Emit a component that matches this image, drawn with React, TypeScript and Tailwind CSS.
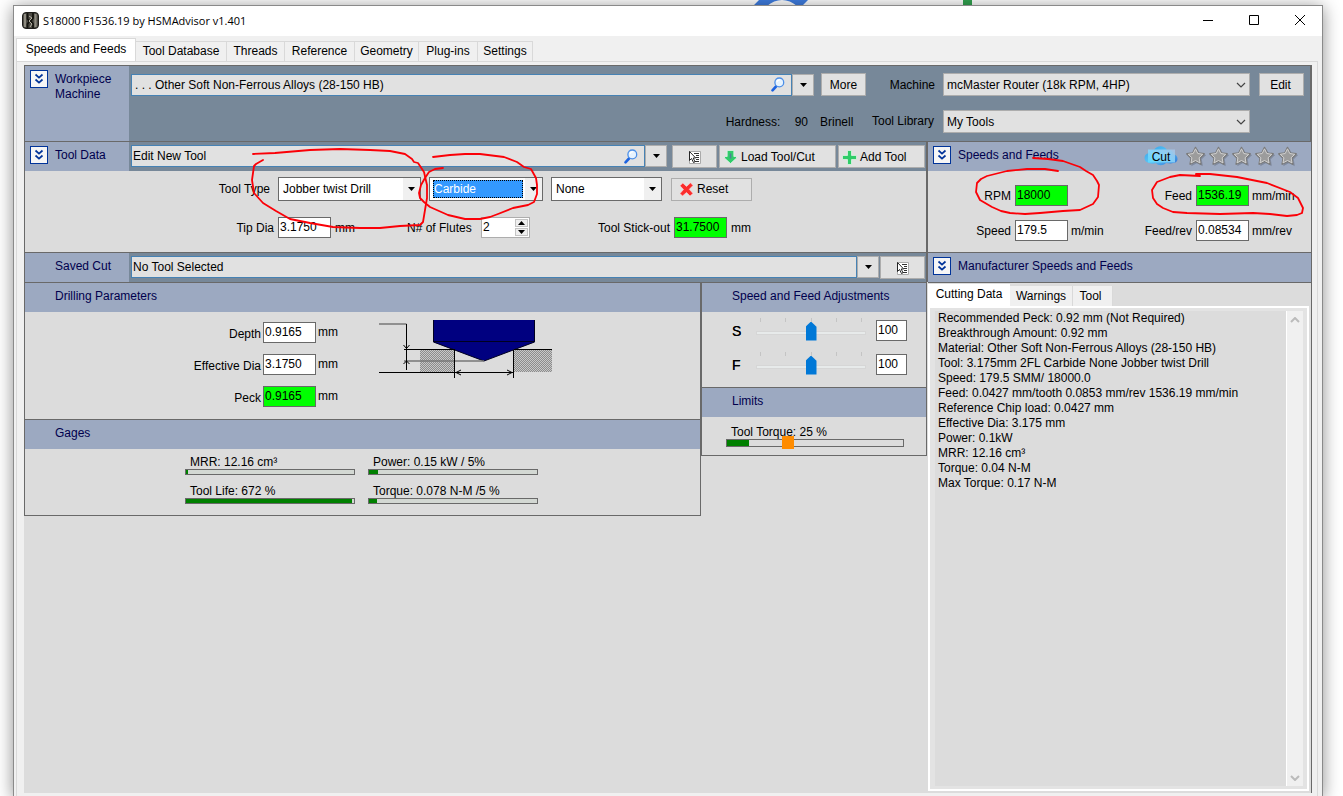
import { useState, ReactNode } from 'react';
import clsx from 'clsx';

// --- Icons ---
const ChevronsDown = () => (
  <svg width="10" height="12" viewBox="0 0 10 12" fill="none" stroke="#003399" strokeWidth="1.7">
    <path d="M1.5 1.5 5 4.7 8.5 1.5M1.5 6.5 5 9.7 8.5 6.5" />
  </svg>
);

const Triangle = () => (
  <svg width="7" height="4" viewBox="0 0 7 4" className="pointer-events-none shrink-0">
    <path d="M0 0h7L3.5 4z" fill="#000" />
  </svg>
);

const ThinChevron = ({ up = false, color = '#444', width = 1.2 }: { up?: boolean; color?: string; width?: number }) => (
  <svg width="10" height="6" viewBox="0 0 10 6" fill="none" stroke={color} strokeWidth={width} className="pointer-events-none shrink-0">
    <path d={up ? 'M1 5 5 1 9 5' : 'M1 1 5 5 9 1'} />
  </svg>
);

const SearchIcon = () => (
  <svg width="14" height="15" viewBox="0 0 14 15" fill="none">
    <path d="M5 9.5 1.5 13.3" stroke="#1c62e0" strokeWidth="2.6" strokeLinecap="round" />
    <circle cx="8.3" cy="5.4" r="4.4" fill="#e6f3ff" stroke="#4c8fe8" strokeWidth="1.3" />
    <path d="M6 4.8a2.6 2.6 0 0 1 3-1.9" stroke="#fff" strokeWidth="1.2" />
  </svg>
);

const ListIcon = () => (
  <svg width="13" height="14" viewBox="0 0 13 14">
    <path d="M1.5 1.5h11v12h-11z" fill="#fff" stroke="#aaa" />
    <path d="M6 3.5h5M8 5.5h3M8 7.5h3M8 9.5h3M7 11.5h4" stroke="#333" />
    <path d="M1.5 1.5v9l2-2 2 4 1.500-.7-1.800-3.800h2.500z" fill="#fff" stroke="#111" strokeWidth=".9" />
  </svg>
);

const DownArrowIcon = () => (
  <svg width="13" height="14" viewBox="0 0 13 14">
    <path d="M3.200 0.500h6.600v6h2.700v1.500L6.500 13.500 0.500 8V6.500h2.700z" fill="#30cc6a" stroke="#e8f6ec" strokeWidth=".7" />
    <path d="M6.500 3.500v5" stroke="#4f7f96" strokeWidth="1.600" />
  </svg>
);

const PlusIcon = () => (
  <svg width="15" height="15" viewBox="0 0 15 15">
    <path d="M5.500 0.500h4v5h5v4h-5v5h-4v-5h-5v-4h5z" fill="#2fcc68" stroke="#e8f8ec" strokeWidth=".7" />
  </svg>
);

const CrossIcon = () => (
  <svg width="15" height="15" viewBox="0 0 15 15">
    <path d="M3.800 1 7.500 4.400 11.500 0.800 14 3.500 10.300 7.300 14 11.500 11 14 7.500 10.500 3.500 14 1 11.500 4.500 7.500 1 3.800z" fill="#fb2c2c" stroke="#fbdada" strokeWidth=".6" />
  </svg>
);

const StarIcon = () => (
  <svg width="22" height="22" viewBox="0 0 22 22">
    <path d="m12 3 2.800 5.300 5.700.8-4.200 4.200 1 6.200-5.300-2.800-5.300 2.800 1-6.200L3.500 9.100l5.700-.8z" fill="#687080" opacity=".55" stroke="#687080" strokeWidth=".8" />
    <path d="m10.500 1.500 2.700 5.500 5.900.9-4.300 4.200 1 6-5.300-2.800-5.300 2.800 1-6-4.300-4.200 5.900-.9z" fill="#9a9a9a" stroke="#7a7a7a" strokeWidth="1.600" strokeLinejoin="round" />
    <path d="m10.500 2.800 2.300 4.700 5 .8-3.700 3.500.9 5.100-4.500-2.400L6 16.900l.9-5.100-3.700-3.500 5-.8z" fill="#9c9c9c" stroke="#d2d2d2" strokeLinejoin="round" />
  </svg>
);

const AppIcon = () => (
  <svg width="17" height="17" viewBox="0 0 17 17">
    <rect x=".5" y=".5" width="16" height="16" rx="3.500" fill="#4a4842" stroke="#1f1e1b" />
    <path d="M3 2v13M13.500 2v13" stroke="#8e8b80" strokeWidth="2.200" />
    <path d="M5.500 1v6l2 2-2 3v4M11 1v5l-2 3 2 3v4" stroke="#15140f" strokeWidth="1.800" fill="none" />
    <path d="m7 4 3 2-3 3 3 3-2 3" stroke="#b5b2a4" fill="none" />
  </svg>
);

const CloudIcon = () => (
  <svg width="34" height="20" viewBox="0 0 34 20" className="absolute inset-0">
    <defs>
      <linearGradient id="cloud" x1="0" y1="0" x2="1" y2="1">
        <stop offset="0" stopColor="#2f9fe8" />
        <stop offset=".5" stopColor="#5cc4f5" />
        <stop offset="1" stopColor="#2d6fd6" />
      </linearGradient>
      <linearGradient id="cloud-plate" x1="0" y1="1" x2="1" y2="0">
        <stop offset="0" stopColor="#5fdcff" />
        <stop offset=".5" stopColor="#8fd8fa" />
        <stop offset="1" stopColor="#a9c4e6" />
      </linearGradient>
    </defs>
    <path d="M5 17C-1 16-1 8 5 7c0-3 3-4 5-3 3-5 10-5 13 0 4-1 6 1 6 4 6 1 6 9 0 9-2 1-5 0-7 0-3 3-8 3-10 0-2 1-5 1-7 0z" fill="url(#cloud)" />
    <path d="M4 3.500h27v13H4z" fill="url(#cloud-plate)" opacity=".85" />
  </svg>
);

// --- Basic controls ---
const ToggleButton = ({ label }: { label: string }) => (
  <button aria-label={label} className="flex size-[18px] shrink-0 items-center justify-center border border-[#003399] bg-[#f6f6f6]">
    <ChevronsDown />
  </button>
);

const GrayButton = ({ className, label, children }: { className?: string; label?: string; children: ReactNode }) => (
  <button
    aria-label={label}
    className={clsx('flex h-[23px] shrink-0 items-center border border-[#adadad] bg-[#e1e1e1]', className)}
  >
    {children}
  </button>
);

const SearchCombo = ({ label, value, search = false, className }: { label: string; value: string; search?: boolean; className?: string }) => (
  <div className="flex h-[22px] min-w-0 flex-1">
    <div className="flex min-w-0 flex-1 items-center border border-[#4682b4] bg-[#e1e1e1] pr-[6px]">
      <input aria-label={label} defaultValue={value} className={clsx('min-w-0 flex-1 bg-transparent pt-px outline-none', className)} />
      {search && (
        <button aria-label={`Search ${label}`}>
          <SearchIcon />
        </button>
      )}
    </div>
    <button aria-label={`Open ${label}`} className="flex w-[22px] items-center justify-center border border-[#adadad] bg-[#e1e1e1]">
      <Triangle />
    </button>
  </div>
);

const ListSelect = ({ id, value }: { id: string; value: string }) => (
  <div className="flex h-[23px] w-[307px] items-center border border-[#adadad] bg-[#e1e1e1] pr-[3px] pl-[3px]">
    <select id={id} className="min-w-0 flex-1 appearance-none bg-transparent pt-px outline-none">
      <option>{value}</option>
    </select>
    <ThinChevron />
  </div>
);

const FlatSelect = ({ id, label, value, className, active = false }: { id?: string; label?: string; value: string; className: string; active?: boolean }) => (
  <div className={clsx('flex h-6 shrink-0 items-center border border-[#696969] bg-white pl-[3px]', className)}>
    <select
      id={id}
      aria-label={label}
      className={clsx(
        'h-[18px] min-w-0 flex-1 appearance-none pt-px outline-none',
        active ? 'border border-dotted border-black bg-[#3399ff] text-white' : 'bg-white pl-px'
      )}
    >
      <option>{value}</option>
    </select>
    <span className="ml-[2px] flex h-[22px] w-[17px] items-center justify-center bg-[#f0f0f0] pr-px">
      <Triangle />
    </span>
  </div>
);

const NumberBox = ({ id, label, value, green = false, narrow = false }: { id?: string; label?: string; value: string; green?: boolean; narrow?: boolean }) => (
  <input
    id={id}
    aria-label={label}
    defaultValue={value}
    className={clsx(
      'h-[21px] shrink-0 border border-[#696969] px-px pb-[2px] outline-none',
      green ? 'bg-[#00ff00]' : 'bg-white',
      narrow ? 'w-[31px]' : 'w-[53px]'
    )}
  />
);

const SectionTitle = ({ children }: { children: ReactNode }) => (
  <h2 className="h-[29px] bg-[#9ca9c1] pt-[6px] pl-[30px] text-[#00004d]">{children}</h2>
);

// --- Gauges ---
const Bar = ({ percent }: { percent: number }) => (
  <div className="h-[6px] w-[170px] border border-[#696969] bg-[#d3d8d3]">
    <div className="h-full bg-[#008000]" style={{ width: `${percent}%` }} />
  </div>
);

const gages = [
  { text: 'MRR: 12.16 cm³', percent: 1 },
  { text: 'Power: 0.15 kW / 5%', percent: 5.5 },
  { text: 'Tool Life: 672 %', percent: 99 },
  { text: 'Torque: 0.078 N-M /5 %', percent: 5 },
];

const AdjustSlider = ({ name }: { name: string }) => {
  const [value, setValue] = useState(100);
  return (
    <div className="flex h-[21px] items-center">
      <label htmlFor={`adjust-${name}`} className="w-6 text-sm [text-shadow:0_0_0_#000]">{name}</label>
      <div className="mr-[10px] flex w-[110px] flex-col">
        <div className="flex justify-between px-1">
          {[0, 1, 2, 3, 4].map((tick) => (
            <span key={tick} className="h-1 w-px bg-[#c4c4c4]" />
          ))}
        </div>
        <input
          id={`adjust-${name}`}
          type="range"
          min={0}
          max={200}
          value={value}
          onChange={(e) => setValue(Number(e.target.value))}
          className="h-[21px] w-full appearance-none bg-transparent [&::-webkit-slider-runnable-track]:h-[4px] [&::-webkit-slider-runnable-track]:border [&::-webkit-slider-runnable-track]:border-[#d6d6d6] [&::-webkit-slider-runnable-track]:bg-[#e7eaea] [&::-webkit-slider-thumb]:-mt-[10px] [&::-webkit-slider-thumb]:h-[19px] [&::-webkit-slider-thumb]:w-[11px] [&::-webkit-slider-thumb]:appearance-none [&::-webkit-slider-thumb]:bg-[#0078d7] [&::-webkit-slider-thumb]:[clip-path:polygon(50%_0,100%_28%,100%_100%,0_100%,0_28%)]"
        />
      </div>
      <NumberBox label={`${name} percent`} value={String(value)} narrow />
    </div>
  );
};

const DrillDiagram = () => (
  <svg width="174" height="60" viewBox="0 0 174 60" className="shrink-0">
    <defs>
      <pattern id="hatch" width="2" height="2" patternUnits="userSpaceOnUse">
        <rect width="2" height="2" fill="#c8c8c8" />
        <path d="M0 0h1v1H0zM1 1h1v1H1z" fill="#8c8c8c" />
      </pattern>
    </defs>
    <path d="M41 30h35v22H41zM135 30h38v22h-38z" fill="url(#hatch)" />
    <path d="M54 0h102v22L105 41 54 22z" fill="#000080" />
    <path d="M54.500 0v22L105 41l50.500-19V0M54 21.500h102" fill="none" stroke="#000020" />
    <path d="M0 4h27.500M25 41h80" stroke="#777" strokeWidth="1.500" fill="none" />
    <path d="M27.500 4v46M25 29.500h51M135 29.500h38M0 52.500h135M75.500 30v28M134.500 30v28M24.500 25l3 3.500 3-3.500M24.500 44l3-3 3 3M82 50l-5 2.500 5 2.500M128 50l5 2.500-5 2.500" stroke="#000" fill="none" />
  </svg>
);

// --- Tabs ---
const mainTabs = [
  { name: 'Speeds and Feeds', width: 'w-[120px]' },
  { name: 'Tool Database', width: 'w-[91px]' },
  { name: 'Threads', width: 'w-[58px]' },
  { name: 'Reference', width: 'w-[70px]' },
  { name: 'Geometry', width: 'w-[64px]' },
  { name: 'Plug-ins', width: 'w-[59px]' },
  { name: 'Settings', width: 'w-[55px]' },
];

const cuttingData = `Recommended Peck: 0.92 mm (Not Required)
Breakthrough Amount: 0.92 mm
Material: Other Soft Non-Ferrous Alloys (28-150 HB)
Tool: 3.175mm 2FL Carbide None Jobber twist Drill
Speed: 179.5 SMM/ 18000.0
Feed: 0.0427 mm/tooth 0.0853 mm/rev 1536.19 mm/min
Reference Chip load: 0.0427 mm
Effective Dia: 3.175 mm
Power: 0.1kW
MRR: 12.16 cm³
Torque: 0.04 N-M
Max Torque: 0.17 N-M`;

// --- Panels ---
const WorkpiecePanel = () => (
  <section className="flex h-[76px] border-t border-r-2 border-[#696969] bg-[#778899]">
    <div className="flex w-[104px] shrink-0 gap-[7px] bg-[#9ca9c1] pt-1 pl-[5px]">
      <ToggleButton label="Collapse workpiece" />
      <h2 className="pt-[2px] text-[#00004d]">
        Workpiece
        <br />
        Machine
      </h2>
    </div>
    <div className="flex min-w-0 flex-1 flex-col gap-[14px] pt-[7px] pr-[6px] pl-[2px]">
      <div className="flex items-center">
        <SearchCombo label="material" value=". . . Other Soft Non-Ferrous Alloys (28-150 HB)" search className="pl-[3px]" />
        <GrayButton className="ml-[7px] w-[45px] justify-center pt-px">More</GrayButton>
        <label htmlFor="machine" className="w-[77px] pt-px pr-2 text-right">Machine</label>
        <ListSelect id="machine" value="mcMaster Router (18k RPM, 4HP)" />
        <GrayButton className="ml-[9px] w-[45px] justify-center pt-px pr-[2px]">Edit</GrayButton>
      </div>
      <div className="flex items-center justify-end pr-[54px]">
        <span className="mr-3 w-[57px] pt-[2px]">Hardness:</span>
        <span className="mr-3 pt-[2px]">90</span>
        <span className="mr-4 w-9 pt-[2px]">Brinell</span>
        <label htmlFor="library" className="w-[71px]">Tool Library</label>
        <ListSelect id="library" value="My Tools" />
      </div>
    </div>
  </section>
);

const ToolDataPanel = () => (
  <section className="border-t border-[#696969]">
    <div className="flex h-[29px] bg-[#778899]">
      <div className="flex w-[104px] shrink-0 gap-[7px] bg-[#9ca9c1] pt-1 pl-[5px]">
        <ToggleButton label="Collapse tool data" />
        <h2 className="pt-[2px] text-[#00004d]">Tool Data</h2>
      </div>
      <div className="flex min-w-0 flex-1 items-start gap-[2px] pt-[3px] pr-px pl-[2px]">
        <SearchCombo label="tool" value="Edit New Tool" search className="pl-px" />
        <GrayButton label="Tool list" className="ml-[3px] w-[45px] justify-center">
          <ListIcon />
        </GrayButton>
        <GrayButton className="w-[117px] gap-1 pt-px pl-1">
          <DownArrowIcon />
          Load Tool/Cut
        </GrayButton>
        <GrayButton className="w-[87px] gap-[3px] pt-px pl-[3px]">
          <PlusIcon />
          Add Tool
        </GrayButton>
      </div>
    </div>
    <div className="h-[81px] pt-[6px]">
      <div className="flex items-center">
        <label htmlFor="tool-type" className="w-[253px] pr-2 text-right">Tool Type</label>
        <FlatSelect id="tool-type" value="Jobber twist Drill" className="w-[143px]" />
        <FlatSelect label="Tool material" value="Carbide" className="ml-2 w-[114px]" active />
        <FlatSelect label="Coating" value="None" className="ml-2 w-[111px]" />
        <GrayButton className="ml-[9px] w-[81px] gap-[3px] pl-[7px]">
          <CrossIcon />
          Reset
        </GrayButton>
      </div>
      <div className="mt-4 flex items-center">
        <label htmlFor="tip-dia" className="w-[253px] pt-px pr-1 text-right">Tip Dia</label>
        <NumberBox id="tip-dia" value="3.1750" />
        <span className="w-[72px] pt-px pl-1">mm</span>
        <label htmlFor="flutes" className="w-[78px] pt-px pl-1">N# of Flutes</label>
        <div className="flex h-[21px] w-[49px] border border-[#adadad] bg-white">
          <input id="flutes" defaultValue="2" className="min-w-0 flex-1 pb-px pl-px outline-none" />
          <div className="flex w-[15px] flex-col gap-px p-px">
            <button aria-label="More flutes" className="flex flex-1 rotate-180 items-center justify-center border border-[#c4c4c4] bg-[#efefef]"><Triangle /></button>
            <button aria-label="Fewer flutes" className="flex flex-1 items-center justify-center border border-[#c4c4c4] bg-[#efefef]"><Triangle /></button>
          </div>
        </div>
        <label htmlFor="stick-out" className="w-[144px] pt-px pr-1 text-right">Tool Stick-out</label>
        <NumberBox id="stick-out" value="31.7500" green />
        <span className="pt-px pl-1">mm</span>
      </div>
    </div>
  </section>
);

const SavedCutPanel = () => (
  <section className="flex h-[30px] border-t border-[#696969] bg-[#778899]">
    <h2 className="w-[104px] shrink-0 bg-[#9ca9c1] pt-[6px] pl-[30px] text-[#00004d]">Saved Cut</h2>
    <div className="flex min-w-0 flex-1 items-start gap-px pt-[3px] pr-px pl-[2px]">
      <SearchCombo label="saved cut" value="No Tool Selected" className="pl-px" />
      <GrayButton label="Saved cut list" className="w-[45px] justify-center">
        <ListIcon />
      </GrayButton>
    </div>
  </section>
);

const drillingFields = [
  { id: 'depth', label: 'Depth', value: '0.9165', green: false },
  { id: 'effective-dia', label: 'Effective Dia', value: '3.1750', green: false },
  { id: 'peck', label: 'Peck', value: '0.9165', green: true },
];

const DrillingPanel = () => (
  <div className="min-w-0 flex-1 border-t border-r border-b border-[#696969]">
    <SectionTitle>Drilling Parameters</SectionTitle>
    <div className="flex h-[107px] items-start">
      <div className="flex flex-col gap-[11px] pt-[10px]">
        {drillingFields.map((field) => (
          <div key={field.id} className="flex h-[21px]">
            <label htmlFor={field.id} className="w-[238px] pt-[5px] pr-[2px] text-right">{field.label}</label>
            <NumberBox id={field.id} value={field.value} green={field.green} />
            <span className="pt-[3px] pl-[2px]">mm</span>
          </div>
        ))}
      </div>
      <div className="pt-2 pl-[41px]">
        <DrillDiagram />
      </div>
    </div>
    <div className="border-t border-[#696969]">
      <SectionTitle>Gages</SectionTitle>
    </div>
    <div className="grid h-[66px] grid-cols-[170px_170px] content-start gap-x-[13px] gap-y-2 pt-[5px] pl-[160px]">
      {gages.map((gage) => (
        <div key={gage.text}>
          <div className="h-[15px] pt-px pl-[5px]">{gage.text}</div>
          <Bar percent={gage.percent} />
        </div>
      ))}
    </div>
  </div>
);

const AdjustmentsPanel = () => (
  <div className="w-[226px] shrink-0 self-start border border-[#696969]">
    <SectionTitle>Speed and Feed Adjustments</SectionTitle>
    <div className="flex h-[75px] flex-col gap-[13px] pt-2 pl-[30px]">
      <AdjustSlider name="S" />
      <AdjustSlider name="F" />
    </div>
    <div className="border-t border-[#696969]">
      <SectionTitle>Limits</SectionTitle>
    </div>
    <div className="h-[38px] pt-2 pl-6">
      <div className="pl-[5px] leading-[14px]">Tool Torque: 25 %</div>
      <div className="relative h-2 w-[178px] border border-[#696969]">
        <div className="h-full bg-[#008000]" style={{ width: '12.5%' }} />
        <span className="absolute -top-1 left-[55px] h-[13px] w-3 bg-[#ff8c00]" />
      </div>
    </div>
  </div>
);

const SpeedsPanel = () => (
  <section className="border-t border-[#696969]">
    <div className="flex h-[29px] items-start bg-[#9ca9c1] pl-[5px]">
      <div className="flex gap-[7px] pt-1">
        <ToggleButton label="Collapse speeds and feeds" />
        <h2 className="pt-[2px] text-[#00004d]">Speeds and Feeds</h2>
      </div>
      <div className="ml-auto flex items-center gap-px pt-1 pr-3">
        <button className="relative mr-[6px] flex h-[22px] w-[34px] items-center justify-center pt-px">
          <CloudIcon />
          <span className="relative">Cut</span>
        </button>
        <StarIcon />
        <StarIcon />
        <StarIcon />
        <StarIcon />
        <StarIcon />
      </div>
    </div>
    <div className="flex h-[81px] flex-col gap-[14px] pt-[14px]">
      <div className="flex items-center">
        <label htmlFor="rpm" className="w-[87px] pt-px pr-1 text-right">RPM</label>
        <NumberBox id="rpm" value="18000" green />
        <label htmlFor="feed" className="w-[128px] pt-px pr-1 text-right">Feed</label>
        <NumberBox id="feed" value="1536.19" green />
        <span className="pt-px pl-[3px]">mm/min</span>
      </div>
      <div className="flex items-center">
        <label htmlFor="speed" className="w-[87px] pt-px pr-1 text-right">Speed</label>
        <NumberBox id="speed" value="179.5" />
        <span className="w-[44px] pt-px pl-[3px]">m/min</span>
        <label htmlFor="feed-rev" className="w-[84px] pt-px pr-1 text-right">Feed/rev</label>
        <NumberBox id="feed-rev" value="0.08534" />
        <span className="pt-px pl-[3px]">mm/rev</span>
      </div>
    </div>
  </section>
);

const ManufacturerPanel = () => (
  <section className="flex min-h-0 flex-1 flex-col border-t border-[#696969]">
    <div className="flex h-[30px] shrink-0 items-start gap-[7px] border-b border-[#696969] bg-[#9ca9c1] pt-1 pl-[5px]">
      <ToggleButton label="Collapse manufacturer data" />
      <h2 className="pt-[2px] text-[#00004d]">Manufacturer Speeds and Feeds</h2>
    </div>
    <div className="flex h-[23px] shrink-0 items-end">
      <button className="h-[22px] w-[82px] bg-white pb-[2px]">Cutting Data</button>
      <button className="h-5 w-[63px] border-r border-[#d9d9d9] bg-[#f0f0f0]">Warnings</button>
      <button className="h-5 w-10 border-r border-[#d9d9d9] bg-[#f0f0f0] pr-1">Tool</button>
    </div>
    <div className="mr-[2px] mb-[2px] flex min-h-0 flex-1 border-2 border-white bg-[#e3e3e3] py-[3px] pr-1 pl-[5px]">
      <textarea
        aria-label="Cutting Data"
        readOnly
        value={cuttingData}
        className="min-w-0 flex-1 resize-none overflow-hidden bg-[#dcdcdc] pl-[3px] outline-none"
      />
      <div className="flex w-[17px] flex-col justify-between border-l border-white bg-[#f0f0f0]">
        <button aria-label="Scroll up" className="flex h-[17px] items-center justify-center"><ThinChevron up color="#bbb" width={2} /></button>
        <button aria-label="Scroll down" className="flex h-[17px] items-center justify-center"><ThinChevron color="#bbb" width={2} /></button>
      </div>
    </div>
  </section>
);

// Hand-drawn marks over the values to look at
const RedMarks = () => (
  <svg width="1343" height="796" viewBox="0 0 1343 796" className="pointer-events-none absolute top-0 left-0" fill="none" stroke="#fb0007" strokeWidth="1.8" strokeLinejoin="round" strokeLinecap="round">
    <path d="M253 154 275 153 310 150 340 149 370 150 390 151 405 154 412 159 414 162 418 163 424 172 427 185 427 198 425 210 423 222 420 225 400 226 380 228 360 228 333 227 310 223 290 219 276 211 263 203 254 193 252 180 254 166 256 164 263 160" />
    <path d="M433 157 450 155 465 154 480 154 504 157 517 162 524 167 531 169 536 178 537 185 537 194 534 202 528 205 513 208 498 214 490 217 480 219 465 219 448 215 430 207 424 202 420 198 419 193 421 185 425 178 429 172 435 169 443 168" />
    <path d="M1033 158 1048 159 1063 161 1080 167 1086 171 1093 175 1097 181 1099 185 1098 197 1093 204 1080 210 1063 211 1040 213 1025 214 1010 213 1001 211 992 207 980 200 976 192 977 183 981 179 987 176 1007 171 1027 169 1045 169 1058 171" />
    <path d="M1200 176 1180 175 1170 177 1157 182 1152 190 1153 198 1157 204 1163 208 1173 212 1187 213 1220 214 1253 213 1270 214 1287 216 1297 215 1302 213 1303 208 1298 198 1290 192 1267 183 1237 177 1210 174 1196 174" />
  </svg>
);

export default function App() {
  const [tab, setTab] = useState('Speeds and Feeds');
  return (
    <div className="relative flex h-screen flex-col overflow-hidden bg-white pt-[5px] pr-5 pl-[13px] font-['Liberation_Sans',Arial,sans-serif] text-xs leading-[15px] text-black">
      {/* Edge of the page behind the window */}
      <svg width="240" height="6" viewBox="0 0 240 6" className="absolute top-0 left-[745px]">
        <path d="M8 6 14 0h49l-6 6h-5C43-2 31-2 22 6z" fill="#3f7de0" />
        <path d="M218 0h9v6h-9z" fill="#32a350" />
      </svg>

      <div className="relative -mb-px flex min-h-0 flex-1 flex-col border border-[#8a8a8a] bg-[#f0f0f0] shadow-[0_2px_16px_rgba(0,0,0,0.45)]">
        <header className="flex h-[30px] shrink-0 items-center justify-between bg-white pr-4 pb-[2px] pl-2">
          <div className="flex items-center gap-1">
            <AppIcon />
            <h1 className="font-['Open_Sans','Noto_Sans',sans-serif] text-[11px]">S18000 F1536.19 by HSMAdvisor v1.401</h1>
          </div>
          <div className="flex gap-[34px]">
            <button aria-label="Minimize"><svg width="12" height="12"><path d="M1 6.5h10" stroke="#000" /></svg></button>
            <button aria-label="Maximize"><svg width="12" height="12"><path d="M1.5 1.5h9v9h-9z" fill="none" stroke="#000" /></svg></button>
            <button aria-label="Close"><svg width="12" height="12"><path d="m1 1 10 10M11 1 1 11" stroke="#000" /></svg></button>
          </div>
        </header>

        <nav className="flex h-[25px] shrink-0 items-end pl-[2px]">
          {mainTabs.map((item) => (
            <button
              key={item.name}
              onClick={() => setTab(item.name)}
              className={clsx(
                'shrink-0 border-t border-r border-[#d9d9d9]',
                item.width,
                tab === item.name ? 'h-[23px] border-l bg-white pb-[2px]' : 'h-5 bg-[#f0f0f0]'
              )}
            >
              {item.name}
            </button>
          ))}
        </nav>

        <main className="mr-1 ml-[2px] flex min-h-0 flex-1 flex-col border-x border-t border-[#d9d9d9] bg-[#f0f0f0] pt-[3px] pr-[5px] pb-[3px] pl-[7px]">
          <div className="flex min-h-0 flex-1 flex-col bg-[#dcdcdc]">
            <div className="border-l border-[#696969]">
              <WorkpiecePanel />
            </div>
            <div className="flex min-h-0 flex-1">
              <div className="flex min-w-0 flex-1 flex-col">
                <div className="border-r-2 border-l border-[#696969]">
                  <ToolDataPanel />
                  <SavedCutPanel />
                </div>
                <div className="flex border-l border-[#696969] pr-px">
                  <DrillingPanel />
                  <AdjustmentsPanel />
                </div>
              </div>
              <div className="flex w-[384px] shrink-0 flex-col border-r border-[#696969]">
                <SpeedsPanel />
                <ManufacturerPanel />
              </div>
            </div>
          </div>
        </main>
      </div>

      <RedMarks />
    </div>
  );
}
